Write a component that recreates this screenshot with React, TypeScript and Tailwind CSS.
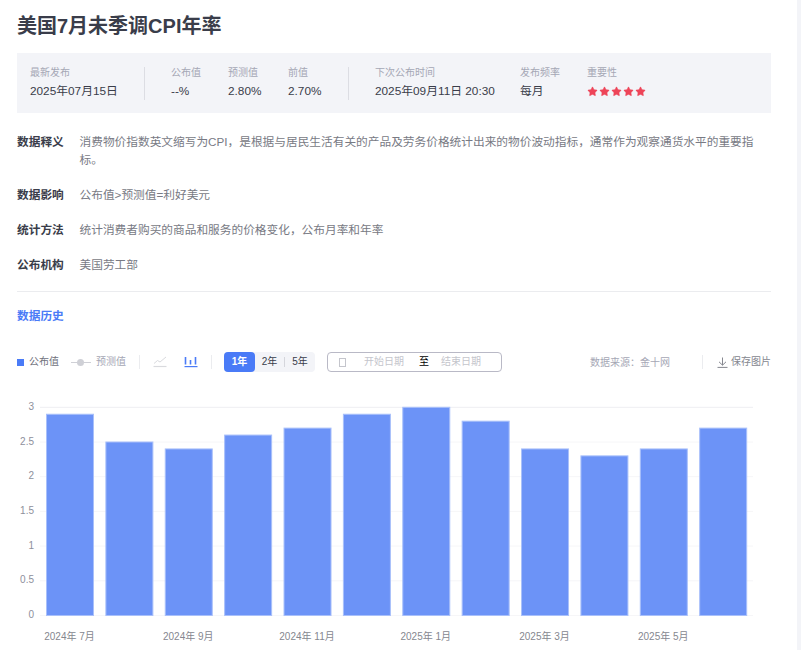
import { Star } from "lucide-react";

const FONT = "font-['Liberation_Sans','Noto_Sans_CJK_SC',sans-serif]";

const VALUES = [2.9, 2.5, 2.4, 2.6, 2.7, 2.9, 3, 2.8, 2.4, 2.3, 2.4, 2.7];
const TICKS = ["0", "0.5", "1", "1.5", "2", "2.5", "3"];
const MONTHS: [number, string][] = [
  [0, "2024年 7月"],
  [2, "2024年 9月"],
  [4, "2024年 11月"],
  [6, "2025年 1月"],
  [8, "2025年 3月"],
  [10, "2025年 5月"],
];

const INFO = [
  {
    label: "数据释义",
    text: "消费物价指数英文缩写为CPI，是根据与居民生活有关的产品及劳务价格统计出来的物价波动指标，通常作为观察通货水平的重要指标。",
    mb: "mb-[17px]",
  },
  { label: "数据影响", text: "公布值>预测值=利好美元", mb: "mb-[17px]" },
  { label: "统计方法", text: "统计消费者购买的商品和服务的价格变化，公布月率和年率", mb: "mb-[17px]" },
  { label: "公布机构", text: "美国劳工部", mb: "" },
];

function Stat({ label, className, children }: { label: string; className: string; children: React.ReactNode }) {
  return (
    <div className={`shrink-0 ${className}`}>
      <div className="text-[10px] leading-[14px] text-[#a5a7b5]">{label}</div>
      <div className="mt-[2px] h-[18px] text-[11.8px] leading-[18px] text-[#3a3d4a]">{children}</div>
    </div>
  );
}

function Chart() {
  const base = 225.5;
  const unit = 69.4;
  return (
    <svg width="780" height="260" viewBox="0 0 780 260" className="block">
      {TICKS.map((t, i) => {
        const y = base - (i * unit) / 2;
        return (
          <g key={t}>
            <line x1="23" x2="736" y1={y} y2={y} stroke={i === 6 ? "#eeeef2" : "#f6f6f8"} strokeWidth="1" />
            <text x="17" y={y + 2.5} textAnchor="end" fontSize="10" fill="#8e909c">
              {t}
            </text>
          </g>
        );
      })}
      {VALUES.map((v, i) => (
        <rect
          key={i}
          x={29.5 + i * 59.38}
          y={base - v * unit}
          width="47"
          height={v * unit}
          fill="#6c93f7"
          stroke="#a9c0fa"
          strokeWidth="1"
        />
      ))}
      {MONTHS.map(([i, m]) => (
        <text key={m} x={52.5 + i * 59.38} y="250" textAnchor="middle" fontSize="10" fill="#85878f">
          {m}
        </text>
      ))}
    </svg>
  );
}

export default function App() {
  return (
    <div className={`flex h-[650px] w-[801px] overflow-hidden bg-white ${FONT}`}>
      <div className="w-[797px] shrink-0 pl-[17px] pr-[26px]">
        <h1 className="mt-[13px] text-xl font-bold leading-[26px] text-[#3a3d4a]">美国7月未季调CPI年率</h1>

        {/* Stats */}
        <div className="mt-[14px] flex h-[60px] w-[754px] items-center bg-[#f3f4f8] pl-[13px]">
          <Stat label="最新发布" className="w-[114px]">2025年07月15日</Stat>
          <div className="mr-[26px] h-[33px] w-px shrink-0 bg-[#dcdde3]" />
          <Stat label="公布值" className="w-[57px]">--%</Stat>
          <Stat label="预测值" className="w-[60px]">2.80%</Stat>
          <Stat label="前值" className="w-[60px]">2.70%</Stat>
          <div className="mr-[26px] h-[33px] w-px shrink-0 bg-[#dcdde3]" />
          <Stat label="下次公布时间" className="w-[145px]">2025年09月11日 20:30</Stat>
          <Stat label="发布频率" className="w-[67px]">每月</Stat>
          <Stat label="重要性" className="w-[70px]">
            <div className="flex h-[18px] items-center gap-[1px]">
              {[0, 1, 2, 3, 4].map((i) => (
                <Star key={i} size={11} fill="#ee4458" stroke="#ee4458" strokeWidth={1} />
              ))}
            </div>
          </Stat>
        </div>

        {/* Info rows */}
        <div className="mt-[20px] w-[754px]">
          {INFO.map((row) => (
            <div key={row.label} className={`flex text-[11.7px] leading-[18px] ${row.mb}`}>
              <div className="w-[62.5px] shrink-0 font-bold text-[#3a3d4a]">{row.label}</div>
              <div className="text-[#787a84]">{row.text}</div>
            </div>
          ))}
        </div>

        <div className="mt-[17px] h-px w-[754px] bg-[#ebecef]" />
        <div className="mt-[15px] text-[11.7px] font-bold leading-[18px] text-[#4a7bf7]">数据历史</div>

        {/* Toolbar */}
        <div className="mt-[27px] flex h-5 w-[754px] items-center whitespace-nowrap text-[10px] [&>*]:shrink-0">
          <span className="h-[7px] w-[7px] bg-[#4a7bf7]" />
          <span className="mb-[2px] ml-[5px] text-[#6f717c]">公布值</span>
          <span className="relative ml-3 h-px w-5 bg-[#cfd0d6]">
            <span className="absolute left-[6px] top-[-3px] h-[7px] w-[7px] rounded-full bg-[#cfd0d6]" />
          </span>
          <span className="mb-[2px] ml-[5px] text-[#a5a7b5]">预测值</span>
          <span className="ml-[13px] h-[14px] w-px bg-[#ebecef]" />
          <svg width="14" height="12" viewBox="0 0 14 12" fill="none" className="ml-[13px]">
            <path d="M1 7.5 L4.5 4.5 L7 6 L13 1" stroke="#d9dade" strokeWidth="1" />
            <path d="M0.5 10.5 H13.5" stroke="#d9dade" strokeWidth="1.2" />
          </svg>
          <svg width="14" height="12" viewBox="0 0 14 12" fill="none" className="ml-[17px]">
            <path d="M1.5 1 V8.5 M6.5 4 V8.5 M11.5 1 V8.5" stroke="#4a7bf7" strokeWidth="1.6" />
            <path d="M0.5 10.6 H13.5" stroke="#4a7bf7" strokeWidth="1.2" />
          </svg>
          <span className="ml-[13px] h-[14px] w-px bg-[#ebecef]" />
          <div className="ml-[12px] flex h-5 w-[91px] items-center rounded bg-[#f3f4f8] text-[#3a3d4a]">
            <span className="flex h-5 w-[31px] items-center justify-center rounded bg-[#4a7bf7] pb-[2px] font-bold text-white">1年</span>
            <span className="mb-[2px] flex w-[29px] justify-center">2年</span>
            <span className="h-[10px] w-px bg-[#d5d6dc]" />
            <span className="mb-[2px] flex w-[30px] justify-center">5年</span>
          </div>
          <div className="ml-3 flex h-5 w-[175px] items-center rounded border border-[#b9b9c6] pl-[11px] text-[#c4c5cc]">
            <span className="h-[9px] w-[7px] border border-[#c4c5cc]" />
            <span className="mb-[2px] ml-[18px]">开始日期</span>
            <span className="mb-[2px] ml-[15px] text-black">至</span>
            <span className="mb-[2px] ml-3">结束日期</span>
          </div>
          <span className="ml-[88px] text-[#a5a7b5]">数据来源：金十网</span>
          <span className="ml-[32px] h-[14px] w-px bg-[#ebecef]" />
          <svg width="11" height="11" viewBox="0 0 11 11" fill="none" className="ml-[14px]">
            <path d="M5.5 0.5 V8 M2 4.8 L5.5 8.2 L9 4.8 M0.5 10.4 H10.5" stroke="#85878f" strokeWidth="1" />
          </svg>
          <span className="mb-[2px] ml-[3px] text-[#85878f]">保存图片</span>
        </div>

        <div className="mt-[18px]">
          <Chart />
        </div>
      </div>
      <div className="w-1 shrink-0 bg-[#f3f4f8]" />
    </div>
  );
}
